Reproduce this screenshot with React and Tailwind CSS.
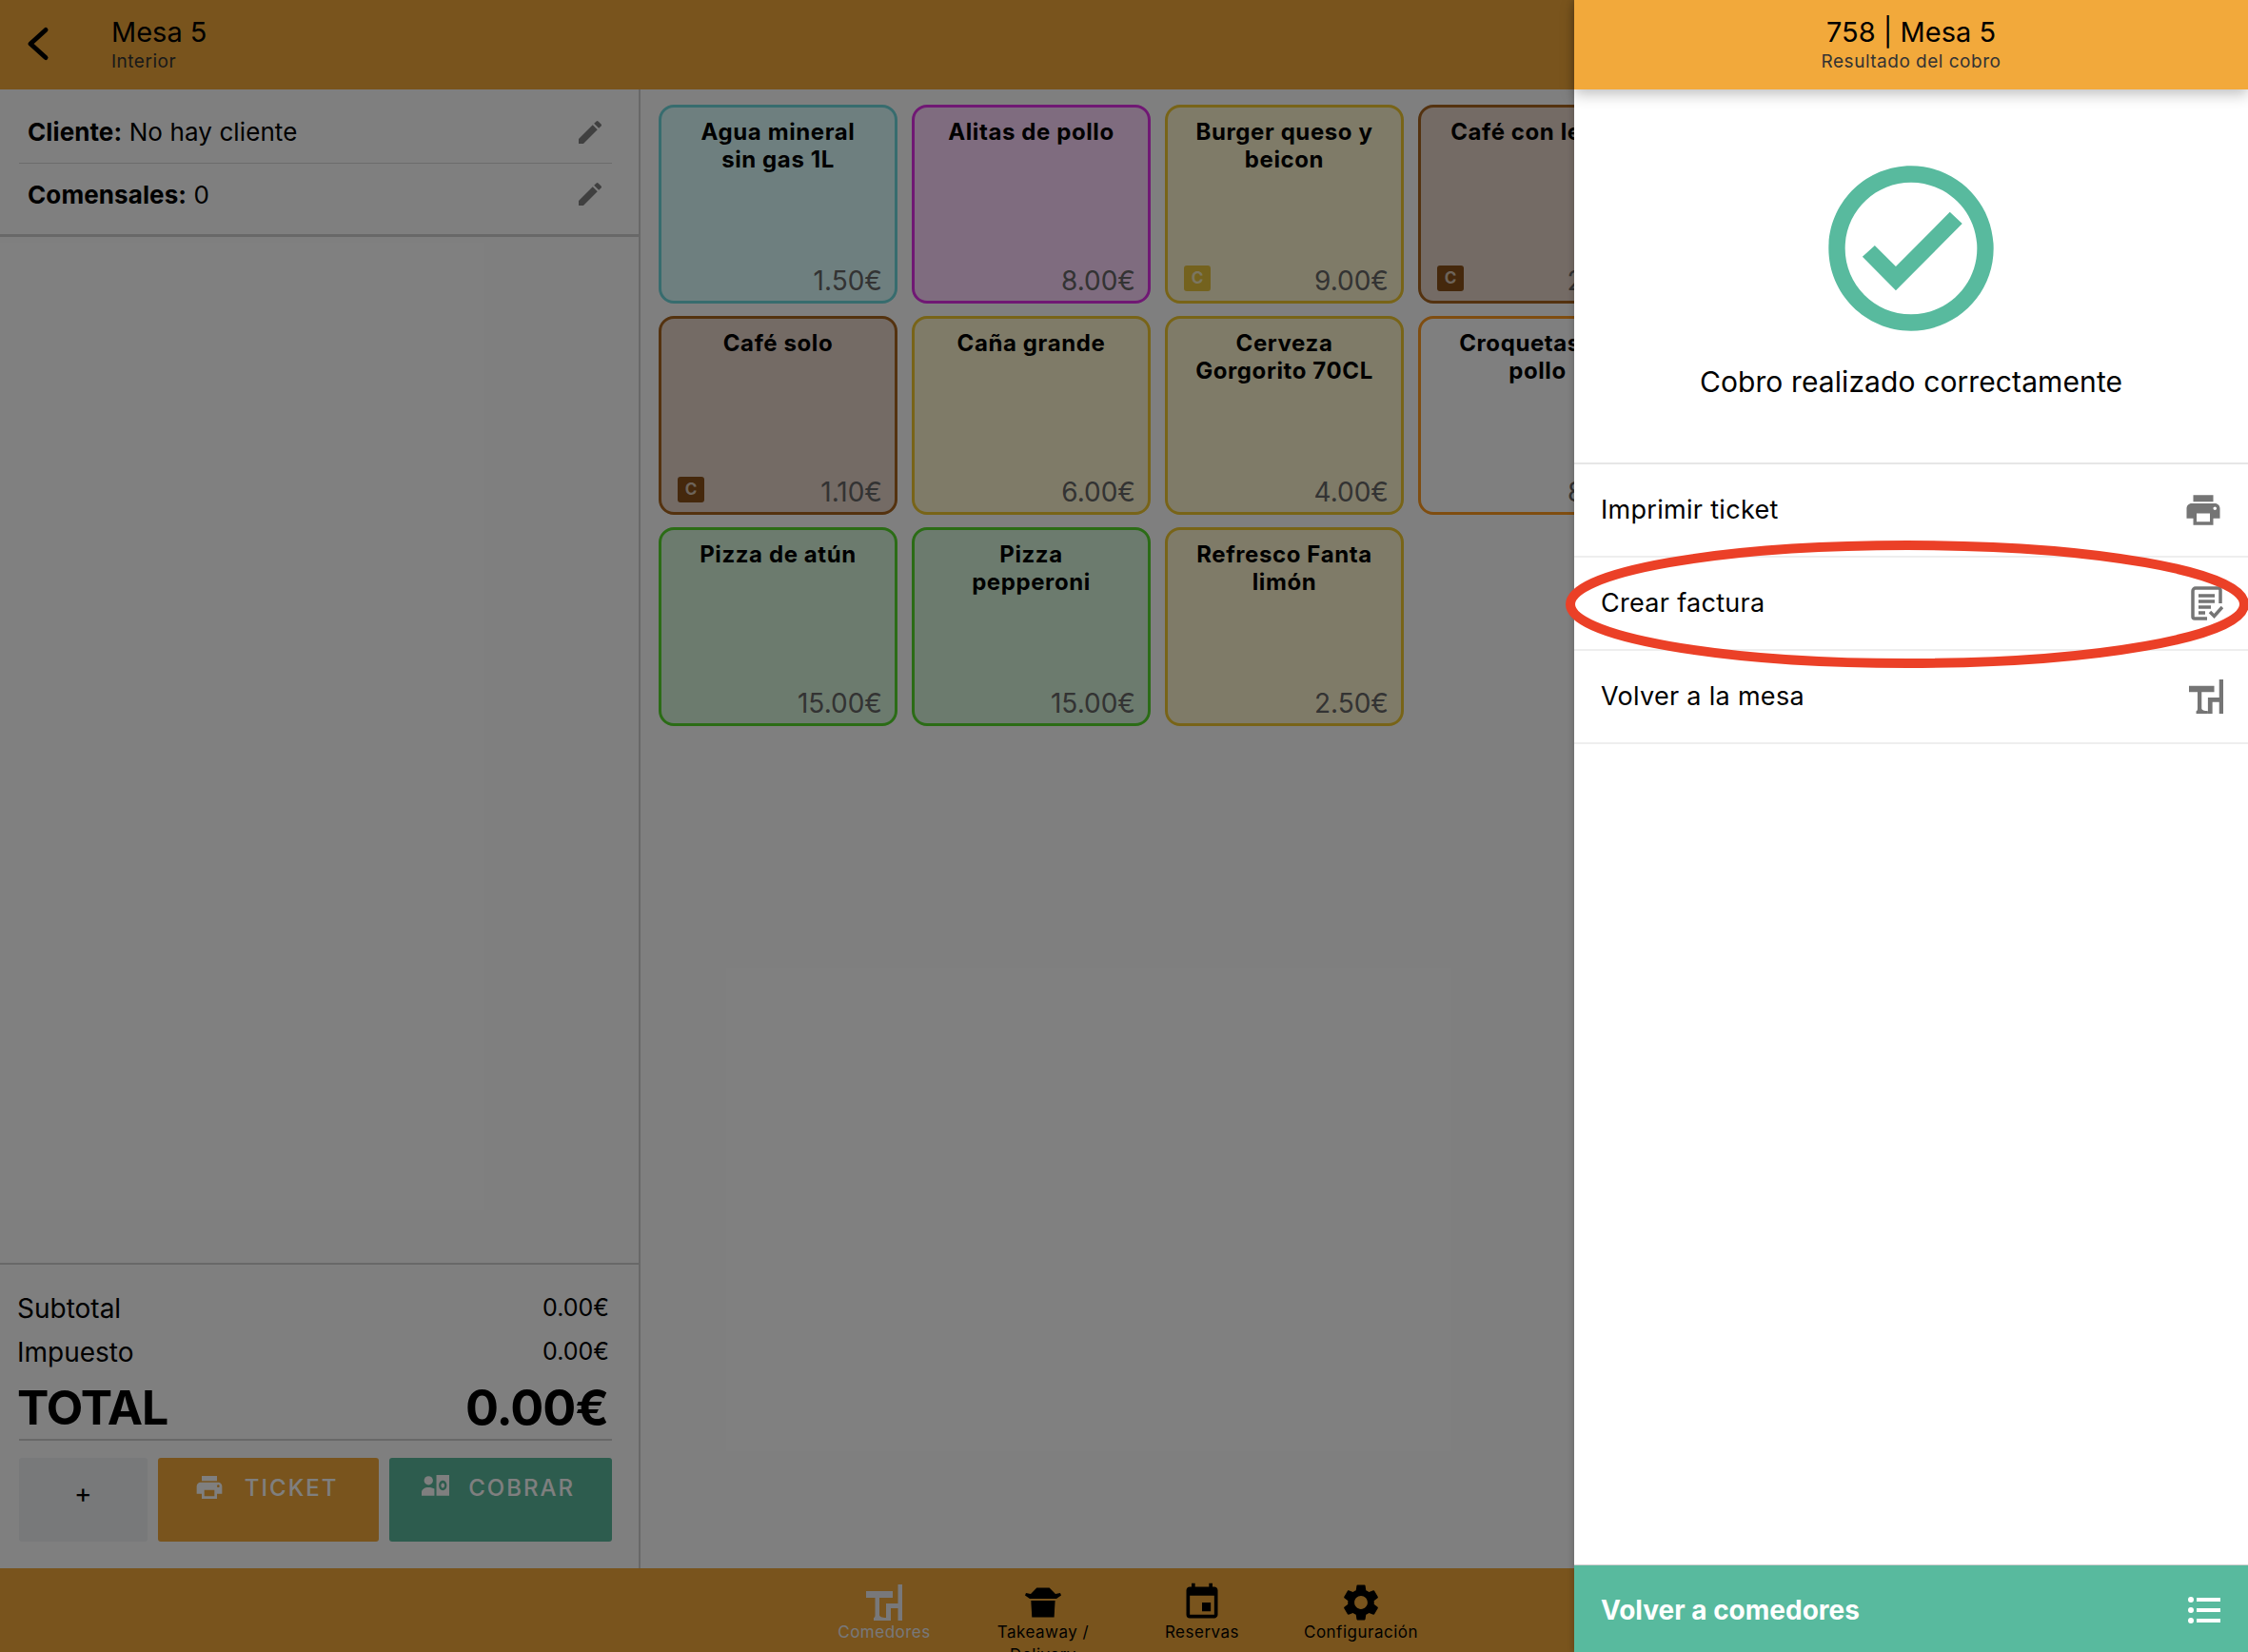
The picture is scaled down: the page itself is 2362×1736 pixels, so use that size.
import { MdPrint, MdEdit, MdSettings, MdEvent } from "react-icons/md";

const font = { fontFamily: "Inter" };

const products = [
  { name: "Agua mineral sin gas 1L", price: "1.50€", card: "bg-[#dcffff] border-[#6fd8dc]" },
  { name: "Alitas de pollo", price: "8.00€", card: "bg-[#ffd8ff] border-[#e030e8]" },
  { name: "Burger queso y beicon", price: "9.00€", card: "bg-[#fff6d0] border-[#f0c830]", badge: "bg-[#e8c43c]" },
  { name: "Café con leche", price: "2.00€", card: "bg-[#e8d6ca] border-[#a8641e]", badge: "bg-[#8a5018]" },
  { name: "Café solo", price: "1.10€", card: "bg-[#e8d6ca] border-[#a8641e]", badge: "bg-[#8a5018]" },
  { name: "Caña grande", price: "6.00€", card: "bg-[#fff6d0] border-[#f0c830]" },
  { name: "Cerveza Gorgorito 70CL", price: "4.00€", card: "bg-[#fff6d0] border-[#f0c830]" },
  { name: "Croquetas de pollo", price: "8.00€", card: "bg-white border-[#ff9a20]" },
  { name: "Pizza de atún", price: "15.00€", card: "bg-[#d8f6dc] border-[#56d82c]" },
  { name: "Pizza pepperoni", price: "15.00€", card: "bg-[#d8f6dc] border-[#56d82c]" },
  { name: "Refresco Fanta limón", price: "2.50€", card: "bg-[#fff6d0] border-[#f0c830]" },
];

function TableIcon({ className }) {
  return (
    <svg viewBox="0 0 38 38" className={className} fill="currentColor">
      <path d="M0 7h28v7H14v18c0 2 3 3 7 3v3H8v-3c1 0 1.500-1 1.500-3V14H0z" />
      <path d="M33.500 0H38v38h-4.500V25H26v13h-5V20h12.500z" />
    </svg>
  );
}

function TakeawayIcon({ className }) {
  return (
    <svg viewBox="0 -3.500 38 38" className={className} fill="currentColor">
      <path d="M12.300 0h13.300L32 6.500l5-1 1 2.500-5 3.500H5L0 8l1-2.500 5 1z" />
      <path d="M6.300 13.500h25.300L30.600 31H7.300z" />
    </svg>
  );
}

function CashIcon({ className }) {
  return (
    <svg viewBox="0 0 28 22" className={className} fill="currentColor">
      <circle cx="7" cy="5.500" r="4.500" />
      <path d="M0 21v-3.500C0 14.500 3 12.500 7 12.500c2.500 0 4.500.5 6 1.500v7z" />
      <path
        fillRule="evenodd"
        d="M15 0h13v21H15zM21.500 5.500c-2.200 0-4 2.200-4 5s1.800 5 4 5 4-2.200 4-5-1.800-5-4-5zM21.500 8c1 0 1.800 1.100 1.800 2.500s-.8 2.500-1.800 2.500-1.800-1.100-1.800-2.500.8-2.500 1.800-2.500z"
      />
    </svg>
  );
}

function InvoiceIcon({ className }) {
  return (
    <svg viewBox="0 0 34 36" className={className} fill="none" stroke="currentColor">
      <path strokeWidth="3.500" d="M31 18V4a2 2 0 0 0-2-2H5a3 3 0 0 0-3 3v27a2 2 0 0 0 2 2h13" />
      <path strokeWidth="3.500" d="M8 10h17M8 16h17M8 22h13M8 28h7" />
      <path strokeWidth="3.500" d="M20 27l4.500 4.500L33 22" />
    </svg>
  );
}

function ListIcon({ className }) {
  return (
    <svg viewBox="0 0 34 28" className={className} fill="currentColor">
      <circle cx="3" cy="3" r="3" />
      <circle cx="3" cy="14" r="3" />
      <circle cx="3" cy="25" r="3" />
      <path d="M9 1h25v4H9zM9 12h25v4H9zM9 23h25v4H9z" />
    </svg>
  );
}

function ProductCard({ name, price, card, badge }) {
  return (
    <div className={`relative h-[209px] rounded-[16px] border-[3px] px-[25px] pt-[11px] ${card}`}>
      <p className="text-center text-[24px] leading-[29px] font-bold tracking-[0.6px] text-black">{name}</p>
      {badge && (
        <span className={`absolute left-[17px] bottom-[10px] flex h-[27px] w-[28px] items-center justify-center rounded-[3px] text-[17px] font-bold text-white/70 ${badge}`}>
          C
        </span>
      )}
      <span className="absolute right-[13px] bottom-[4px] text-[28px] leading-[34px] text-[#666]">{price}</span>
    </div>
  );
}

function InfoRow({ label, value, last }) {
  return (
    <div className={`flex items-center justify-between pl-[9px] pr-[7px] ${last ? "h-[64px]" : "h-[66px] border-b border-[#d8d8d8]"}`}>
      <p className="text-[26px] tracking-[0.1px] text-black">
        <span className="font-bold">{label}</span> {value}
      </p>
      <MdEdit className="text-[#808080]" size={32} />
    </div>
  );
}

function NavItem({ icon, label, active }) {
  return (
    <div className={`flex w-[167px] flex-col items-center px-[20px] pt-[17px] text-center ${active ? "text-[#f0f0f4]" : "text-black"}`}>
      <div className="flex h-[38px] shrink-0 items-center justify-center">{icon}</div>
      <span className="shrink-0 text-[17px] leading-[24px] tracking-[0.5px]">{label}</span>
    </div>
  );
}

function ActionRow({ label, icon }) {
  return (
    <div className="flex h-[98px] items-center justify-between border-b-2 border-[#eeeeee] pl-[28px] pr-[26px] text-[#757575]">
      <span className="text-[27px] tracking-[0.3px] text-black">{label}</span>
      {icon}
    </div>
  );
}

export default function App() {
  return (
    <div className="relative flex h-[1736px] w-[2362px] flex-col overflow-hidden bg-white" style={font}>
      <header className="flex h-[94px] shrink-0 items-center bg-[#f2a93b]">
        <svg viewBox="0 0 28 40" className="ml-[26px] h-[40px] w-[28px]" fill="none" stroke="black" strokeWidth="5" strokeLinecap="round" strokeLinejoin="round">
          <path d="M22 4.500L6 19 22 33.500" />
        </svg>
        <div className="ml-[63px] pb-[1px]">
          <p className="text-[29px] leading-[34px] text-black">Mesa 5</p>
          <p className="mt-[3px] text-[19px] leading-[22px] tracking-[0.5px] text-[#333]">Interior</p>
        </div>
      </header>

      <div className="flex min-h-0 flex-1">
        <aside className="flex w-[673px] shrink-0 flex-col border-r-2 border-[#d0d0d0]">
          <div className="border-b-[3px] border-[#d0d0d0] pb-[10px] pl-[20px] pr-[28px] pt-[12px]">
            <InfoRow label="Cliente:" value="No hay cliente" />
            <InfoRow label="Comensales:" value="0" last />
          </div>
          <div className="flex-1" />
          <div className="border-t-2 border-[#d0d0d0] pb-[28px] pl-[20px] pr-[28px] pt-[23px]">
            <div className="-ml-[2px] flex h-[46px] items-center justify-between pr-[3px] text-[28px] text-black">
              <span>Subtotal</span>
              <span className="text-[25px]">0.00€</span>
            </div>
            <div className="-ml-[2px] flex h-[46px] items-center justify-between pr-[3px] text-[28px] text-black">
              <span>Impuesto</span>
              <span className="text-[25px]">0.00€</span>
            </div>
            <div className="flex h-[70px] items-center justify-between border-b-2 border-[#d0d0d0] pt-[3px] text-[50px] font-bold tracking-[-1px] text-black">
              <span className="-ml-[2px]">TOTAL</span>
              <span className="pr-[4px] text-[52px]">0.00€</span>
            </div>
            <div className="mt-[18px] flex h-[88px] gap-[11px]">
              <button className="w-[135px] rounded-[3px] bg-[#f0f2f4] pb-[14px] text-[28px] text-black">+</button>
              <button className="flex w-[233px] items-start justify-center gap-[21px] rounded-[3px] bg-[#f2a93b] pr-[5px] pt-[14px] text-[24px] font-medium tracking-[2px] text-white">
                <MdPrint className="mt-[1px]" size={32} />
                <span>TICKET</span>
              </button>
              <button className="flex w-[234px] items-start justify-center gap-[20px] rounded-[3px] bg-[#5bb89c] pr-[5px] pt-[14px] text-[24px] font-medium tracking-[2px] text-white">
                <CashIcon className="mt-[3px] h-[25px] w-[29px]" />
                <span>COBRAR</span>
              </button>
            </div>
          </div>
        </aside>

        <main className="flex-1 overflow-hidden pl-[19px] pt-[16px]">
          <div className="grid grid-cols-[repeat(4,251px)] gap-x-[15px] gap-y-[13px]">
            {products.map((p) => (
              <ProductCard key={p.name} {...p} />
            ))}
          </div>
        </main>
      </div>

      <nav className="flex h-[88px] shrink-0 justify-center overflow-hidden bg-[#f2a93b] pr-[3px]">
        <NavItem active label="Comedores" icon={<TableIcon className="h-[38px] w-[38px]" />} />
        <NavItem label="Takeaway / Delivery" icon={<TakeawayIcon className="h-[38px] w-[38px]" />} />
        <NavItem label="Reservas" icon={<MdEvent size={44} />} />
        <NavItem label="Configuración" icon={<MdSettings size={46} />} />
      </nav>

      {/* dimmed backdrop behind the drawer */}
      <div className="absolute inset-0 bg-black/50" />

      <section className="absolute inset-y-0 right-0 flex w-[708px] flex-col bg-white shadow-[-2px_0_6px_rgba(0,0,0,0.15)]">
        <div className="flex h-[94px] shrink-0 flex-col items-center justify-center bg-[#f2a93b] pb-[1px] text-center shadow-[0_5px_14px_rgba(0,0,0,0.25)]">
          <p className="text-[29px] leading-[34px] text-black">758 | Mesa 5</p>
          <p className="mt-[3px] text-[19px] leading-[22px] tracking-[0.5px] text-[#333]">Resultado del cobro</p>
        </div>

        <div className="flex h-[394px] shrink-0 flex-col items-center border-b-2 border-[#e6e6e6] pt-[63px]">
          <svg viewBox="0 0 24 24" className="h-[208px] w-[208px] text-[#58ba9e]" fill="currentColor">
            <path fillRule="evenodd" d="M12 2C6.480 2 2 6.480 2 12s4.480 10 10 10 10-4.480 10-10S17.520 2 12 2zm0 18c-4.420 0-8-3.580-8-8s3.580-8 8-8 8 3.580 8 8-3.580 8-8 8z" />
            <path d="M16.700 7.600L10.150 14.200 7.600 11.650 6.100 13l4.050 4.100L18.200 9z" />
          </svg>
          <p className="mt-[17px] text-[30px] leading-[38px] tracking-[0.1px] text-black">Cobro realizado correctamente</p>
        </div>

        <ActionRow label="Imprimir ticket" icon={<MdPrint size={42} />} />
        <ActionRow label="Crear factura" icon={<InvoiceIcon className="h-[36px] w-[34px]" />} />
        <ActionRow label="Volver a la mesa" icon={<TableIcon className="h-[36px] w-[36px]" />} />

        <div className="flex-1" />

        <div className="flex h-[92px] shrink-0 items-center justify-between border-t border-[#cccccc] bg-[#58ba9e] pl-[28px] pr-[29px] pt-[3px] text-white">
          <span className="text-[28px] font-bold">Volver a comedores</span>
          <ListIcon className="h-[28px] w-[34px]" />
        </div>
      </section>

      {/* red annotation ellipse drawn on the screenshot */}
      <svg className="absolute left-[1640px] top-[560px] h-[150px] w-[722px] overflow-visible" viewBox="0 0 722 150" fill="none">
        <ellipse cx="364" cy="75" rx="354" ry="62" stroke="#eb4027" strokeWidth="10" />
      </svg>
    </div>
  );
}
